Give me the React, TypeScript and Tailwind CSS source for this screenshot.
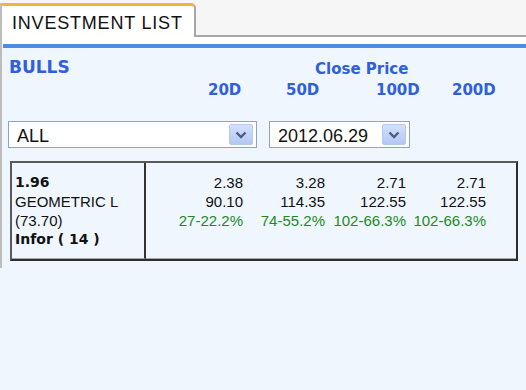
import React from 'react';

const cols = [
  { period: '20D', ma: '2.38', close: '90.10', change: '27-22.2%' },
  { period: '50D', ma: '3.28', close: '114.35', change: '74-55.2%' },
  { period: '100D', ma: '2.71', close: '122.55', change: '102-66.3%' },
  { period: '200D', ma: '2.71', close: '122.55', change: '102-66.3%' },
];

const bold = "font-['DejaVu_Sans',sans-serif] font-bold";

const Chevron = () => (
  <svg width="12" height="8" viewBox="0 0 12 8">
    <path d="M1.5 1.5 L6 6 L10.5 1.5" fill="none" stroke="#4a5f88" strokeWidth="2.4" />
  </svg>
);

const SelectBox = ({ value, width }: { value: string; width: string }) => (
  <div className={`${width} h-[27px] bg-white border border-[#8aa5c8] flex items-center justify-between pl-[8px] pr-[3px]`}>
    <span className="text-[18px] leading-[22px] text-[#111] pt-[2px]">{value}</span>
    <div className="w-[24px] h-[21px] rounded-[2px] border border-[#b9c9ec] bg-gradient-to-b from-[#d4e0fb] to-[#b3c8f4] flex items-center justify-center">
      <Chevron />
    </div>
  </div>
);

export default function App() {
  return (
    <div className="w-[526px] h-[390px] bg-[#eff6fe] overflow-hidden font-['Liberation_Sans',Arial,sans-serif]">
      {/* tab strip */}
      <div className="h-[37px] bg-[#f6f6f6] flex items-end">
        <div className="w-[196px] h-[34px] bg-white border-t-[3px] border-t-[#f2b143] border-l-2 border-l-[#bdbdbd] border-r-2 border-r-[#a6a6a6] rounded-tr-[5px] pl-[10px] pt-[6px]">
          <span className="text-[18px] leading-[20px] text-[#111] tracking-[0.8px]">INVESTMENT LIST</span>
        </div>
        <div className="flex-1 h-[3px] border-b-2 border-[#a8a8a8]" />
      </div>

      <div className="h-[231px] border-l-2 border-[#bdbdbd]">
        <div className="h-[7px] bg-white" />
        <div className="h-[4px] ml-[1px] bg-[#4f8ae6]" />

        {/* headers */}
        <div className="flex items-start pl-[7px] pt-[9px]">
          <div className={`w-[306px] text-[17px] leading-[20px] text-[#2f5fdc] ${bold}`}>BULLS</div>
          <div className={`mt-[3px] text-[15px] leading-[18px] text-[#2f5fdc] ${bold}`}>Close Price</div>
        </div>
        <div className={`flex mt-[3px] text-[15px] leading-[18px] text-[#2f5fdc] ${bold}`}>
          <div className="w-[206px]" />
          <div className="w-[78px]">20D</div>
          <div className="w-[90px]">50D</div>
          <div className="w-[76px]">100D</div>
          <div>200D</div>
        </div>

        {/* filters */}
        <div className="flex gap-[12px] ml-[6px] mt-[22px]">
          <SelectBox value="ALL" width="w-[249px]" />
          <SelectBox value="2012.06.29" width="w-[141px]" />
        </div>

        {/* result table */}
        <div className="ml-[8px] mt-[13px] w-[508px] h-[100px] flex border-2 border-[#5a5a5a] border-r-[#2e2e2e] border-b-[#2e2e2e]">
          <div className="w-[134px] border-r-2 border-[#333] border-b border-b-[#a8a8a8] pl-[3px] pt-[10px] text-[15px] leading-[19px] text-[#111]">
            <div className={`text-[14px] ${bold}`}>1.96</div>
            <div>GEOMETRIC L</div>
            <div>(73.70)</div>
            <div className={`text-[14px] ${bold}`}>Infor ( 14 )</div>
          </div>
          <div className="flex-1 border-b border-[#a8a8a8] pl-[16px] pt-[10px] grid grid-cols-[81px_82px_81px_80px] text-[15px] leading-[19px] text-right">
            {cols.map((c) => (
              <div key={c.period}>
                <div className="text-[#111]">{c.ma}</div>
                <div className="text-[#111]">{c.close}</div>
                <div className="text-[#1d8a1d]">{c.change}</div>
              </div>
            ))}
          </div>
        </div>
      </div>
    </div>
  );
}
